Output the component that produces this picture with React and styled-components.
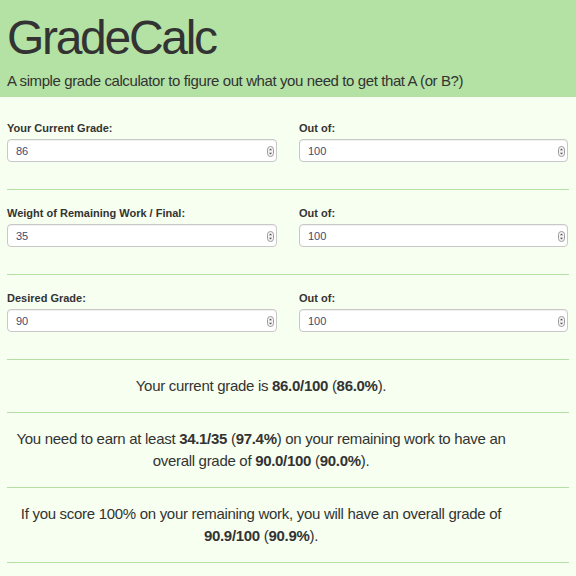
import React from "react";
import styled, { createGlobalStyle } from "styled-components";

const Global = createGlobalStyle`
  html, body { margin: 0; padding: 0; }
  body {
    background: #f7fff0;
    font-family: "Liberation Sans", Arial, Helvetica, sans-serif;
    color: #333;
  }
`;

const Header = styled.header`
  background: #b4e2a4;
  height: 97px;
  box-sizing: border-box;
  padding: 10px 7px 0;
`;

const Title = styled.h1`
  margin: 0;
  font-size: 48px;
  line-height: 56px;
  font-weight: 400;
  letter-spacing: -2.3px;
  color: #333;
`;

const Subtitle = styled.p`
  margin: 4px 0 0;
  font-size: 15px;
  line-height: 22px;
  letter-spacing: -0.4px;
  color: #333;
`;

const Main = styled.main`
  padding: 8px 7px 0;
`;

const FieldRow = styled.section`
  display: grid;
  grid-template-columns: 270px 270px;
  column-gap: 22px;
  padding: 16px 0 27px;
  border-bottom: 1px solid #b4e2a4;
`;

const Field = styled.div`
  display: flex;
  flex-direction: column;
  gap: 4px;
`;

const Label = styled.label`
  font-size: 11px;
  line-height: 14px;
  font-weight: 700;
  color: #333;
`;

const InputWrap = styled.div`
  position: relative;
  width: ${(p) => p.$w}px;
`;

const Input = styled.input`
  box-sizing: border-box;
  width: 100%;
  height: 23px;
  margin: 0;
  padding: 0 8px;
  border: 1px solid #c8c8c8;
  border-radius: 4px;
  background: #fff;
  font-family: "Liberation Sans", Arial, sans-serif;
  font-size: 11px;
  color: #3d4a73;
  outline: none;
  box-shadow: inset 0 1px 1px rgba(0, 0, 0, 0.06);
`;

const Spinner = styled.svg`
  position: absolute;
  right: 3px;
  top: 7px;
  width: 7px;
  height: 11px;
`;

const Result = styled.p`
  margin: 0;
  padding: 15px 54px 15px 0;
  font-size: 15px;
  line-height: 22px;
  letter-spacing: -0.3px;
  text-align: center;
  color: #333;
  border-bottom: 1px solid #b4e2a4;
  b { font-weight: 700; }
`;

function NumberField({ label, value, width }) {
  return (
    <Field>
      <Label>{label}</Label>
      <InputWrap $w={width}>
        <Input type="text" defaultValue={value} readOnly />
        <Spinner viewBox="0 0 7 11">
          <rect x="0.5" y="0.5" width="6" height="10" rx="3" fill="#f3f3f3" stroke="#9a9a9a" />
          <path d="M2 4.2 L3.5 2.6 L5 4.2 Z" fill="#555" />
          <path d="M2 6.8 L3.5 8.4 L5 6.8 Z" fill="#555" />
        </Spinner>
      </InputWrap>
    </Field>
  );
}

const rows = [
  ["Your Current Grade:", "86", "100"],
  ["Weight of Remaining Work / Final:", "35", "100"],
  ["Desired Grade:", "90", "100"],
];

export default function App() {
  return (
    <>
      <Global />
      <Header>
        <Title>GradeCalc</Title>
        <Subtitle>A simple grade calculator to figure out what you need to get that A (or B?)</Subtitle>
      </Header>
      <Main>
        {rows.map(([l, v, o]) => (
          <FieldRow key={l}>
            <NumberField label={l} value={v} width={270} />
            <NumberField label="Out of:" value={o} width={269} />
          </FieldRow>
        ))}
        <Result>
          Your current grade is <b>86.0/100</b> (<b>86.0%</b>).
        </Result>
        <Result>
          You need to earn at least <b>34.1/35</b> (<b>97.4%</b>) on your remaining work to have an overall grade of <b>90.0/100</b> (<b>90.0%</b>).
        </Result>
        <Result>
          If you score 100% on your remaining work, you will have an overall grade of <b>90.9/100</b> (<b>90.9%</b>).
        </Result>
      </Main>
    </>
  );
}
